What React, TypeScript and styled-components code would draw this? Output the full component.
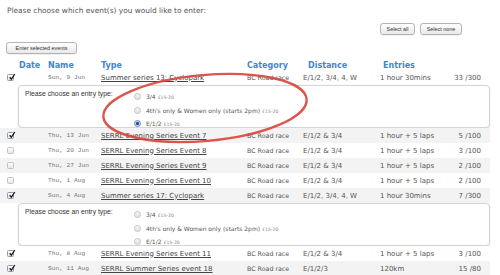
import React from "react"
import styled, { createGlobalStyle } from 'styled-components';

// Styled Components ======================================================

const GlobalStyle = createGlobalStyle`
    html, body {
        margin: 0;
        padding: 0;
        background: #fff;
        overflow: hidden;
    }
`;

const Page = styled.div`
    position: relative;
    width: 500px;
    height: 275px;
    font-family: "DejaVu Sans", Verdana, sans-serif;
    color: #555;
`;

const Intro = styled.div`
    font-size: 7.4px;
    line-height: 10px;
    padding: 6px 0 0 7px;
`;

const TopBar = styled.div`
    display: flex;
    justify-content: flex-end;
    gap: 5px;
    padding: 7px 38px 0 0;
`;

const MacButton = styled.button<{ $w: number }>`
    display: block;
    width: ${p => p.$w}px;
    height: 12px;
    padding: 0;
    font-family: "Liberation Sans", Arial, sans-serif;
    font-size: 5.4px;
    color: #333;
    background: linear-gradient(#ffffff, #e9e9e9);
    border: 1px solid #b4b4b4;
    border-radius: 3px;
    box-shadow: 0 0.5px 0.5px rgba(0, 0, 0, 0.12);
`;

const EnterBar = styled.div`
    display: flex;
    padding: 7px 0 0 6px;
`;

const Table = styled.div`
    margin-top: 7px;
    width: 490px;
`;

const COLS = '19px 29px 53px 146px 56px 77px 68px 42px';

const HeadRow = styled.div`
    display: grid;
    grid-template-columns: ${COLS};
    height: 9px;
    align-items: center;
    font-size: 8px;
    font-weight: bold;
    color: #3f87cb;
`;

const HeadCell = styled.div<{ $indent?: number }>`
    padding-left: ${p => p.$indent || 0}px;
    white-space: nowrap;
`;

const Row = styled.div<{ $striped: boolean }>`
    display: grid;
    grid-template-columns: ${COLS};
    height: 15px;
    align-items: center;
    background: ${p => p.$striped ? '#f3f3f3' : '#fff'};
    font-size: 7px;
    white-space: nowrap;
`;

const DateCell = styled.div`
    font-family: "Liberation Mono", "Courier New", monospace;
    font-size: 6.2px;
    color: #777;
`;

const NameLink = styled.a`
    color: #444;
    text-decoration: underline;
`;

const SmallCell = styled.div`
    font-size: 6.3px;
`;

const Count = styled.div`
    text-align: right;
    padding-right: 9px;
`;

const CheckBox = styled.span<{ $checked: boolean }>`
    margin-left: 7px;
    width: 7px;
    height: 7px;
    border: 1px solid ${p => p.$checked ? '#8e9aa8' : '#bfc4ca'};
    border-radius: 1.5px;
    background: linear-gradient(#fdfdfd, #e4e7ea);
    position: relative;
    box-sizing: border-box;
    display: block;

    svg {
        position: absolute;
        left: -0.5px;
        top: -2px;
    }
`;

const Panel = styled.div`
    margin: 0 0 0 18px;
    width: 472px;
    height: 43px;
    box-sizing: border-box;
    border: 1px solid #d4d4d4;
    border-radius: 4px;
    box-shadow: 0 1px 2px rgba(0, 0, 0, 0.12);
    background: #fff;
    display: flex;
`;

const Prompt = styled.div`
    width: 109px;
    padding: 4px 0 0 6px;
    font-family: "Liberation Sans", Arial, sans-serif;
    font-size: 6.8px;
    color: #333;
`;

const Options = styled.div`
    display: flex;
    flex-direction: column;
    gap: 6.5px;
    padding-top: 7px;
`;

const Option = styled.label`
    display: flex;
    align-items: center;
    gap: 5px;
    height: 7.5px;
    font-size: 6px;
    color: #555;
    white-space: nowrap;
`;

const Price = styled.span`
    font-size: 4.6px;
    color: #888;
    margin-left: 2px;
`;

const Radio = styled.span<{ $on: boolean }>`
    width: 7px;
    height: 7px;
    border-radius: 50%;
    box-sizing: border-box;
    border: 1px solid ${p => p.$on ? '#6f8fb8' : '#c3c3c3'};
    background: ${p => p.$on
        ? 'radial-gradient(circle, #1e4f96 0 1.3px, #a9c4e6 1.6px, #e6eef8 3px)'
        : 'linear-gradient(#f6f6f6, #e2e2e2)'};
`;

const Circle = styled.svg`
    position: absolute;
    left: 0;
    top: 0;
    pointer-events: none;
`;

// =========================================================================

type Ev = {
    checked: boolean;
    date: string;
    name: string;
    cat: string;
    dist: string;
    dur: string;
    entries: string;
    panel?: number;
};

const events: Ev[] = [
    { checked: true, date: 'Sun, 9 Jun', name: 'Summer series 13: Cyclopark', cat: 'BC Road race', dist: 'E/1/2, 3/4, 4, W', dur: '1 hour 30mins', entries: '33 /300', panel: 2 },
    { checked: true, date: 'Thu, 13 Jun', name: 'SERRL Evening Series Event 7', cat: 'BC Road race', dist: 'E/1/2 & 3/4', dur: '1 hour + 5 laps', entries: '5 /100' },
    { checked: false, date: 'Thu, 20 Jun', name: 'SERRL Evening Series Event 8', cat: 'BC Road race', dist: 'E/1/2 & 3/4', dur: '1 hour + 5 laps', entries: '3 /100' },
    { checked: false, date: 'Thu, 27 Jun', name: 'SERRL Evening Series Event 9', cat: 'BC Road race', dist: 'E/1/2 & 3/4', dur: '1 hour + 5 laps', entries: '2 /100' },
    { checked: false, date: 'Thu, 1 Aug', name: 'SERRL Evening Series Event 10', cat: 'BC Road race', dist: 'E/1/2 & 3/4', dur: '1 hour + 5 laps', entries: '2 /100' },
    { checked: true, date: 'Sun, 4 Aug', name: 'Summer series 17: Cyclopark', cat: 'BC Road race', dist: 'E/1/2, 3/4, 4, W', dur: '1 hour 30mins', entries: '7 /300', panel: -1 },
    { checked: true, date: 'Thu, 8 Aug', name: 'SERRL Evening Series Event 11', cat: 'BC Road race', dist: 'E/1/2 & 3/4', dur: '1 hour + 5 laps', entries: '3 /100' },
    { checked: true, date: 'Sun, 11 Aug', name: 'SERRL Summer Series event 18', cat: 'BC Road race', dist: 'E/1/2/3', dur: '120km', entries: '15 /80' },
];

const entryTypes = ['3/4', "4th's only & Women only (starts 2pm)", 'E/1/2'];

function EntryPanel({ selected }: { selected: number }) {
    return (
        <Panel>
            <Prompt>Please choose an entry type:</Prompt>
            <Options>
                {entryTypes.map((t, i) => (
                    <Option key={t}>
                        <Radio $on={i === selected} />
                        <span>{t}<Price>£15-20</Price></span>
                    </Option>
                ))}
            </Options>
        </Panel>
    );
}

export default function App() {
    return (
        <Page>
            <GlobalStyle />
            <Intro>Please choose which event(s) you would like to enter:</Intro>
            <TopBar>
                <MacButton $w={35}>Select all</MacButton>
                <MacButton $w={42}>Select none</MacButton>
            </TopBar>
            <EnterBar>
                <MacButton $w={71}>Enter selected events</MacButton>
            </EnterBar>
            <Table>
                <HeadRow>
                    <div />
                    <HeadCell>Date</HeadCell>
                    <HeadCell>Name</HeadCell>
                    <HeadCell>Type</HeadCell>
                    <HeadCell>Category</HeadCell>
                    <HeadCell $indent={5}>Distance</HeadCell>
                    <HeadCell $indent={3}>Entries</HeadCell>
                    <div />
                </HeadRow>
                {events.map((ev, i) => (
                    <React.Fragment key={ev.date}>
                        <Row $striped={i % 2 === 1}>
                            <CheckBox $checked={ev.checked}>
                                {ev.checked && (
                                    <svg width="8" height="8" viewBox="0 0 8 8">
                                        <path d="M1.6 4.2 L3.4 6.2 L6.8 1" fill="none" stroke="#1b1b1b" strokeWidth="1.3" />
                                    </svg>
                                )}
                            </CheckBox>
                            <div />
                            <DateCell>{ev.date}</DateCell>
                            <div><NameLink>{ev.name}</NameLink></div>
                            <SmallCell>{ev.cat}</SmallCell>
                            <div>{ev.dist}</div>
                            <div>{ev.dur}</div>
                            <Count>{ev.entries}</Count>
                        </Row>
                        {ev.panel !== undefined && <EntryPanel selected={ev.panel} />}
                    </React.Fragment>
                ))}
            </Table>
            <Circle width="500" height="275">
                <ellipse cx="205" cy="108" rx="102" ry="33" transform="rotate(-5 205 108)"
                    fill="none" stroke="#d8443a" strokeWidth="2.4" opacity="0.9" />
            </Circle>
        </Page>
    );
}
